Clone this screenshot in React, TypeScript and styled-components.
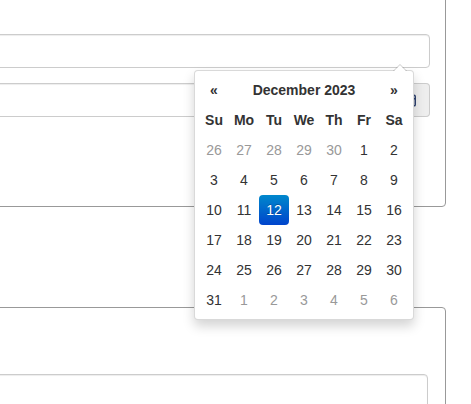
import React from "react";
import styled, { createGlobalStyle } from "styled-components";
import { Calendar } from "lucide-react";

const GlobalStyle = createGlobalStyle`
  html, body {
    margin: 0;
    padding: 0;
    background: #fff;
    overflow: hidden;
  }
  body {
    font-family: "Liberation Sans", Arial, sans-serif;
    font-size: 14px;
    color: #333;
  }
`;

const Page = styled.div`
  position: relative;
  width: 471px;
  height: 404px;
  overflow: hidden;
`;

const Column = styled.div`
  display: flex;
  flex-direction: column;
  gap: 100px;
  margin-left: -60px;
  width: 506px;
`;

const Panel = styled.div<{ $top: number; $bottom: number; $right: number; $offset?: number }>`
  border: 1px solid #999;
  border-radius: 4px;
  margin-top: ${(p) => p.$offset ?? 0}px;
  padding: ${(p) => p.$top}px ${(p) => p.$right}px ${(p) => p.$bottom}px 15px;
  display: flex;
  flex-direction: column;
  gap: 15px;
`;

const Input = styled.div`
  height: 34px;
  box-sizing: border-box;
  border: 1px solid #ccc;
  border-radius: 4px;
  background: #fff;
  box-shadow: inset 0 1px 1px rgba(0, 0, 0, 0.075);
`;

const InputGroup = styled.div`
  display: flex;
  height: 34px;
`;

const GroupInput = styled(Input)`
  flex: 1;
  border-radius: 4px 0 0 4px;
`;

const Addon = styled.div`
  box-sizing: border-box;
  width: 39px;
  display: flex;
  align-items: center;
  justify-content: center;
  background: #eee;
  border: 1px solid #ccc;
  border-left: none;
  border-radius: 0 4px 4px 0;
  color: #2a3f6e;
`;

const Picker = styled.div`
  position: absolute;
  left: 194px;
  top: 70px;
  width: 220px;
  box-sizing: border-box;
  padding: 4px;
  background: #fff;
  border: 1px solid rgba(0, 0, 0, 0.15);
  border-radius: 4px;
  box-shadow: 0 6px 12px rgba(0, 0, 0, 0.175);

  &:before {
    content: "";
    position: absolute;
    top: -7px;
    right: 6px;
    border-left: 7px solid transparent;
    border-right: 7px solid transparent;
    border-bottom: 7px solid rgba(0, 0, 0, 0.2);
  }
  &:after {
    content: "";
    position: absolute;
    top: -6px;
    right: 7px;
    border-left: 6px solid transparent;
    border-right: 6px solid transparent;
    border-bottom: 6px solid #fff;
  }
`;

const Grid = styled.div`
  display: grid;
  grid-template-columns: repeat(7, 30px);
  grid-auto-rows: 30px;
`;

const Cell = styled.div<{ $muted?: boolean; $bold?: boolean; $active?: boolean; $span?: number }>`
  display: flex;
  align-items: center;
  justify-content: center;
  border-radius: 4px;
  grid-column: span ${(p) => p.$span ?? 1};
  font-weight: ${(p) => (p.$bold ? 700 : 400)};
  color: ${(p) => (p.$active ? "#fff" : p.$muted ? "#999" : "#333")};
  background: ${(p) => (p.$active ? "linear-gradient(to bottom, #0088cc, #0044cc)" : "transparent")};
  text-shadow: ${(p) => (p.$active ? "0 -1px 0 rgba(0,0,0,0.25)" : "none")};
`;

const days = ["Su", "Mo", "Tu", "We", "Th", "Fr", "Sa"];

const cells: { d: number; muted: boolean }[] = [
  ...[26, 27, 28, 29, 30].map((d) => ({ d, muted: true })),
  ...Array.from({ length: 31 }, (_, i) => ({ d: i + 1, muted: false })),
  ...[1, 2, 3, 4, 5, 6].map((d) => ({ d, muted: true })),
];

export default function App() {
  return (
    <Page>
      <GlobalStyle />
      <Column>
        <Panel $offset={-20} $top={53} $bottom={89} $right={15}>
          <Input />
          <InputGroup>
            <GroupInput />
            <Addon>
              <Calendar size={14} strokeWidth={2.5} />
            </Addon>
          </InputGroup>
        </Panel>
        <Panel $top={66} $bottom={60} $right={17}>
          <Input />
        </Panel>
      </Column>
      <Picker>
        <Grid>
          <Cell $bold>«</Cell>
          <Cell $bold $span={5}>December 2023</Cell>
          <Cell $bold>»</Cell>
          {days.map((d) => (
            <Cell key={d} $bold>
              {d}
            </Cell>
          ))}
          {cells.map((c, i) => (
            <Cell key={i} $muted={c.muted} $active={!c.muted && c.d === 12}>
              {c.d}
            </Cell>
          ))}
        </Grid>
      </Picker>
    </Page>
  );
}
